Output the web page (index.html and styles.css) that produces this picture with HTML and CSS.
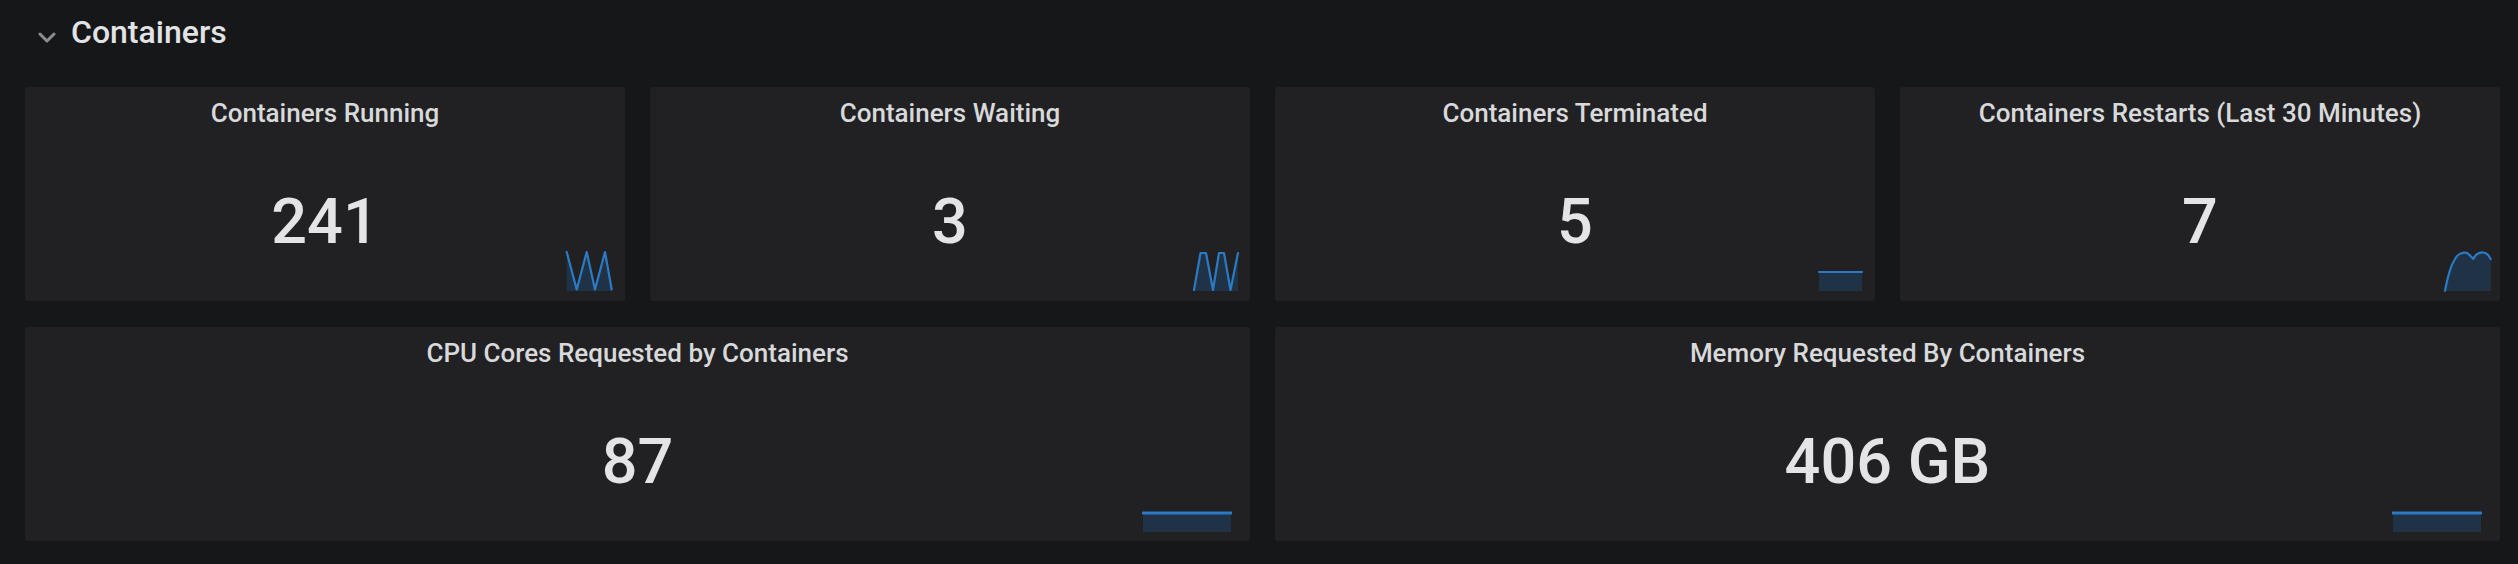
FILE: index.html
```html
<!DOCTYPE html>
<html>
<head>
<meta charset="utf-8">
<title>Containers</title>
<link rel="stylesheet" href="styles.css">
</head>
<body>
<div class="dashboard">
  <div class="row-header">
    <svg class="chevron" viewBox="0 0 20 12" width="20" height="12"><polyline points="3,3 10,10 17,3" fill="none" stroke="#8b8d92" stroke-width="3" stroke-linecap="round" stroke-linejoin="round"/></svg>
    <span class="row-title">Containers</span>
  </div>
  <div class="grid">
    <div class="panel">
      <div class="panel-title">Containers Running</div>
      <div class="panel-value">241</div>
      <svg class="spark" viewBox="0 0 52 44" width="52" height="44">
        <polygon class="fill" points="1.7,3 11.7,40.5 21.7,3 30,40.5 40,3 46.7,40.5 46.7,42 1.7,42"/>
        <polyline class="line" points="1.7,3 11.7,40.5 21.7,3 30,40.5 40,3 46.7,40.5"/>
      </svg>
    </div>
    <div class="panel">
      <div class="panel-title">Containers Waiting</div>
      <div class="panel-value">3</div>
      <svg class="spark" viewBox="0 0 52 44" width="52" height="44">
        <polygon class="fill" points="4,41 10.5,4 16,4 23,41 29,4 34,4 40.5,41 48,4 48,42 4,42"/>
        <polyline class="line" points="4,41 10.5,4 16,4 23,41 29,4 34,4 40.5,41 48,4"/>
      </svg>
    </div>
    <div class="panel">
      <div class="panel-title">Containers Terminated</div>
      <div class="panel-value">5</div>
      <svg class="spark" viewBox="0 0 52 44" width="52" height="44">
        <rect class="fill" x="4" y="23" width="43" height="19"/>
        <polyline class="line" points="4,23 47,23"/>
      </svg>
    </div>
    <div class="panel">
      <div class="panel-title">Containers Restarts (Last 30 Minutes)</div>
      <div class="panel-value">7</div>
      <svg class="spark" viewBox="0 0 52 44" width="52" height="44">
        <path class="fill" d="M5,41.7 C7,31 11,16 15,10 C17,6.5 19,5 21,4.5 C23,3.5 25,3.2 27,4 C29.5,5 31,8 33.3,9.8 C34.5,7.5 35.5,6 37,5.2 C39,3.8 41,3.3 43,3.5 C45,3.6 47,4.5 48.5,6.5 L50.7,10 L50.7,42 L5,42 Z"/>
        <path class="line" d="M5,41.7 C7,31 11,16 15,10 C17,6.5 19,5 21,4.5 C23,3.5 25,3.2 27,4 C29.5,5 31,8 33.3,9.8 C34.5,7.5 35.5,6 37,5.2 C39,3.8 41,3.3 43,3.5 C45,3.6 47,4.5 48.5,6.5 L50.7,10"/>
      </svg>
    </div>
    <div class="panel wide">
      <div class="panel-title">CPU Cores Requested by Containers</div>
      <div class="panel-value">87</div>
      <svg class="spark spark-wide" viewBox="0 0 90 40" width="90" height="40">
        <rect class="fill" x="1" y="20" width="88" height="19"/>
        <polyline class="line" points="1,20 89,20"/>
      </svg>
    </div>
    <div class="panel wide">
      <div class="panel-title">Memory Requested By Containers</div>
      <div class="panel-value">406 GB</div>
      <svg class="spark spark-wide" viewBox="0 0 90 40" width="90" height="40">
        <rect class="fill" x="1" y="20" width="88" height="19"/>
        <polyline class="line" points="1,20 89,20"/>
      </svg>
    </div>
  </div>
</div>
</body>
</html>
```

FILE: styles.css
```css
html, body {
  margin: 0;
  padding: 0;
  background: #161719;
}

body {
  font-family: Roboto, "Liberation Sans", Arial, sans-serif;
  color: #d8d9da;
}

.dashboard {
  box-sizing: border-box;
  width: 2518px;
  height: 564px;
  padding: 13px 18px 0 25px;
  overflow: hidden;
}

.row-header {
  display: flex;
  align-items: baseline;
  gap: 14px;
  height: 38px;
  padding-left: 12px;
  line-height: 38px;
}

.chevron {
  display: block;
  flex: none;
}

.row-title {
  font-size: 32px;
  font-weight: 500;
  color: #e2e3e5;
}

.grid {
  display: grid;
  grid-template-columns: repeat(4, 600px);
  grid-auto-rows: 214px;
  column-gap: 25px;
  row-gap: 26px;
  margin-top: 36px;
}

.panel {
  position: relative;
  box-sizing: border-box;
  background: #212124;
  border-radius: 3px;
  padding-top: 11px;
  text-align: center;
}

.wide {
  grid-column: span 2;
}

.panel-title {
  font-size: 26px;
  line-height: 30px;
  font-weight: 500;
  color: #d8d9da;
  white-space: nowrap;
}

.panel-value {
  margin-top: 62px;
  font-size: 63px;
  line-height: 63px;
  font-weight: 500;
  color: #e4e4e6;
  white-space: nowrap;
}

.spark {
  position: absolute;
  right: 8px;
  bottom: 8px;
  display: block;
}

.spark-wide {
  right: 18px;
  bottom: 8px;
}

.spark .line {
  fill: none;
  stroke: #2b7bc4;
  stroke-width: 2.2;
  stroke-linejoin: round;
  stroke-linecap: round;
}

.spark-wide .line {
  stroke-width: 3;
}

.spark .fill {
  fill: rgba(31, 120, 193, 0.22);
  stroke: none;
}
```
